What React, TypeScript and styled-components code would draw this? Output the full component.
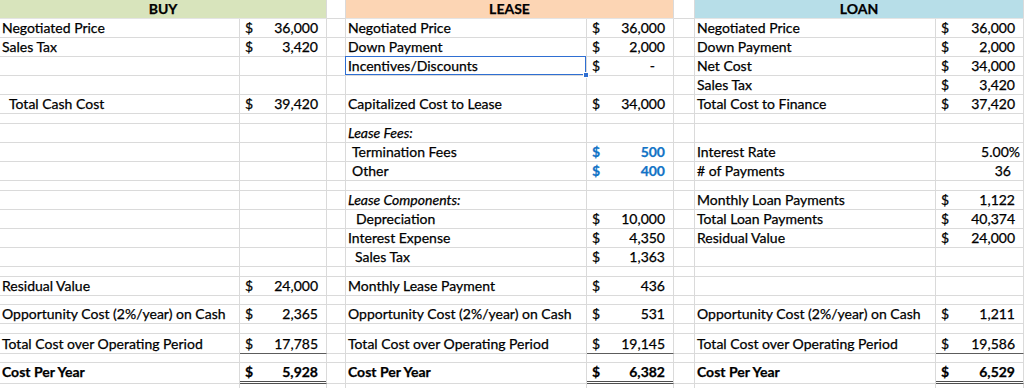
import React from 'react';
import styled, { createGlobalStyle, css } from 'styled-components';

const GlobalStyle = createGlobalStyle`
  html, body { margin: 0; padding: 0; background: #ffffff; }
  body { font-family: Lato, "Liberation Sans", sans-serif; color: #000; }
`;

const GRID = '#dadada';
const BLUE = '#1273c6';

type Money = { kind: 'money'; amount: string; blue?: boolean; bold?: boolean; underline?: 'single' | 'double'; dash?: boolean };
type Plain = { kind: 'plain'; text: string; pad: number };
type Section = { label?: string; italic?: boolean; bold?: boolean; indent?: number; selected?: boolean; value?: Money | Plain };
type Row = { h: number; lift?: number; cells?: [Section, Section, Section] };

const m = (amount: string, extra: Partial<Money> = {}): Money => ({ kind: 'money', amount, ...extra });
const p = (text: string, pad: number): Plain => ({ kind: 'plain', text, pad });
const E: Section = {};

const ROWS: Row[] = [
  { h: 19, cells: [{ label: 'Negotiated Price', value: m('36,000') }, { label: 'Negotiated Price', value: m('36,000') }, { label: 'Negotiated Price', value: m('36,000') }] },
  { h: 19, cells: [{ label: 'Sales Tax', value: m('3,420') }, { label: 'Down Payment', value: m('2,000') }, { label: 'Down Payment', value: m('2,000') }] },
  { h: 19, cells: [E, { label: 'Incentives/Discounts', selected: true, value: m('-', { dash: true }) }, { label: 'Net Cost', value: m('34,000') }] },
  { h: 19, cells: [E, E, { label: 'Sales Tax', value: m('3,420') }] },
  { h: 19, cells: [{ label: 'Total Cash Cost', indent: 7, value: m('39,420') }, { label: 'Capitalized Cost to Lease', value: m('34,000') }, { label: 'Total Cost to Finance', value: m('37,420') }] },
  { h: 10 },
  { h: 19, cells: [E, { label: 'Lease Fees:', italic: true }, E] },
  { h: 19, cells: [E, { label: 'Termination Fees', indent: 4, value: m('500', { blue: true, bold: true }) }, { label: 'Interest Rate', value: p('5.00%', 3) }] },
  { h: 19, cells: [E, { label: 'Other', indent: 4, value: m('400', { blue: true, bold: true }) }, { label: '# of Payments', value: p('36', 12) }] },
  { h: 10 },
  { h: 19, cells: [E, { label: 'Lease Components:', italic: true }, { label: 'Monthly Loan Payments', value: m('1,122') }] },
  { h: 19, cells: [E, { label: 'Depreciation', indent: 8, value: m('10,000') }, { label: 'Total Loan Payments', value: m('40,374') }] },
  { h: 19, cells: [E, { label: 'Interest Expense', value: m('4,350') }, { label: 'Residual Value', value: m('24,000') }] },
  { h: 19, cells: [E, { label: 'Sales Tax', indent: 7, value: m('1,363') }, E] },
  { h: 10 },
  { h: 19, cells: [{ label: 'Residual Value', value: m('24,000') }, { label: 'Monthly Lease Payment', value: m('436') }, E] },
  { h: 9 },
  { h: 19, cells: [{ label: 'Opportunity Cost (2%/year) on Cash', value: m('2,365') }, { label: 'Opportunity Cost (2%/year) on Cash', value: m('531') }, { label: 'Opportunity Cost (2%/year) on Cash', value: m('1,211') }] },
  { h: 10 },
  { h: 20, cells: [
    { label: 'Total Cost over Operating Period', value: m('17,785', { underline: 'single' }) },
    { label: 'Total Cost over Operating Period', value: m('19,145', { underline: 'single' }) },
    { label: 'Total Cost over Operating Period', value: m('19,586', { underline: 'single' }) },
  ] },
  { h: 9 },
  { h: 21, lift: 2, cells: [
    { label: 'Cost Per Year', bold: true, value: m('5,928', { bold: true, underline: 'double' }) },
    { label: 'Cost Per Year', bold: true, value: m('6,382', { bold: true, underline: 'double' }) },
    { label: 'Cost Per Year', bold: true, value: m('6,529', { bold: true, underline: 'double' }) },
  ] },
  { h: 12 },
];

const Sheet = styled.div<{ $rows: string }>`
  display: grid;
  grid-template-columns: 240px 87px 19px 241px 87px 21px 241px 88px;
  grid-template-rows: 19px ${(pr) => pr.$rows};
  width: 1024px;
  height: 388px;
  overflow: hidden;
  font-size: 14px;
  -webkit-text-stroke: 0.25px currentColor;
`;

const Cell = styled.div<{ $lift?: number }>`
  box-sizing: border-box;
  position: relative;
  display: flex;
  align-items: flex-end;
  min-width: 0;
  white-space: nowrap;
  line-height: 18px;
  border-right: 1px solid ${GRID};
  border-bottom: 1px solid ${GRID};
  padding-bottom: ${(pr) => pr.$lift ?? 0}px;
`;

const HeaderCell = styled(Cell)<{ $bg: string }>`
  grid-column: span 2;
  justify-content: center;
  background: ${(pr) => pr.$bg};
  font-weight: 700;
  border-bottom-color: #e4e4e4;
`;

const GapCell = styled(Cell)``;

const LabelCell = styled(Cell)<{ $indent: number; $italic?: boolean; $bold?: boolean; $selected?: boolean }>`
  padding-left: ${(pr) => 2 + pr.$indent}px;
  font-style: ${(pr) => (pr.$italic ? 'italic' : 'normal')};
  font-weight: ${(pr) => (pr.$bold ? 700 : 400)};
  ${(pr) =>
    pr.$selected &&
    css`
      &::after {
        content: '';
        position: absolute;
        left: -1px;
        top: -1px;
        right: 0;
        bottom: 0;
        border: 1px solid #2f6fd2;
        pointer-events: none;
      }
    `}
`;

const Handle = styled.span`
  position: absolute;
  right: -3px;
  bottom: -3px;
  width: 4px;
  height: 4px;
  background: #2f6fd2;
  border: 1px solid #fff;
  z-index: 2;
`;

const ValueCell = styled(Cell)<{ $blue?: boolean; $bold?: boolean; $underline?: 'single' | 'double'; $padRight: number }>`
  justify-content: space-between;
  padding-left: 5px;
  padding-right: ${(pr) => pr.$padRight}px;
  color: ${(pr) => (pr.$blue ? BLUE : '#000')};
  font-weight: ${(pr) => (pr.$bold ? 700 : 400)};
  ${(pr) =>
    pr.$underline === 'single' &&
    css`
      border-bottom-color: #5c5c5c;
    `}
  ${(pr) =>
    pr.$underline === 'double' &&
    css`
      border-bottom-color: #4f4f4f;
      box-shadow: inset 0 -1px 0 #fff, inset 0 -2px 0 #4f4f4f;
    `}
`;

const PlainCell = styled(Cell)<{ $padRight: number }>`
  justify-content: flex-end;
  padding-right: ${(pr) => pr.$padRight}px;
`;

function renderSection(s: Section, lift: number | undefined, key: string) {
  const label = (
    <LabelCell key={key + 'l'} $indent={s.indent ?? 0} $italic={s.italic} $bold={s.bold} $selected={s.selected} $lift={lift}>
      {s.label ?? ''}
      {s.selected && <Handle />}
    </LabelCell>
  );
  let value: React.ReactNode;
  const v = s.value;
  if (!v) {
    value = <Cell key={key + 'v'} $lift={lift} />;
  } else if (v.kind === 'money') {
    value = (
      <ValueCell key={key + 'v'} $blue={v.blue} $bold={v.bold} $underline={v.underline} $padRight={v.dash ? 18 : 8} $lift={lift}>
        <span>$</span>
        <span>{v.amount}</span>
      </ValueCell>
    );
  } else {
    value = (
      <PlainCell key={key + 'v'} $padRight={v.pad} $lift={lift}>
        {v.text}
      </PlainCell>
    );
  }
  return [label, value];
}

export default function App() {
  const rowTemplate = ROWS.map((r) => `${r.h}px`).join(' ');
  return (
    <>
      <GlobalStyle />
      <Sheet $rows={rowTemplate}>
        <HeaderCell $bg="#d8e4bc">BUY</HeaderCell>
        <GapCell />
        <HeaderCell $bg="#fcd5b4">LEASE</HeaderCell>
        <GapCell />
        <HeaderCell $bg="#b7dee8">LOAN</HeaderCell>
        {ROWS.map((r, i) => {
          const cells = r.cells ?? [E, E, E];
          return (
            <React.Fragment key={i}>
              {renderSection(cells[0], r.lift, `${i}a`)}
              <GapCell $lift={r.lift} />
              {renderSection(cells[1], r.lift, `${i}b`)}
              <GapCell $lift={r.lift} />
              {renderSection(cells[2], r.lift, `${i}c`)}
            </React.Fragment>
          );
        })}
      </Sheet>
    </>
  );
}
